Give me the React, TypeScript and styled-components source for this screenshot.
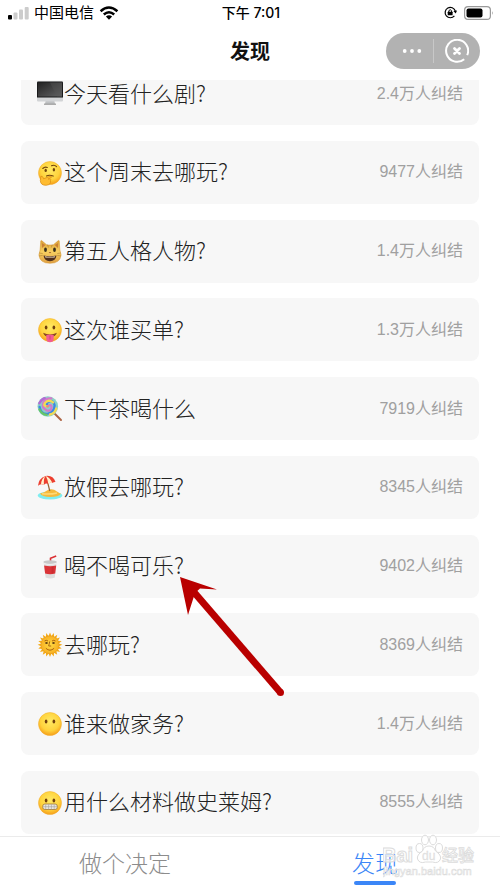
import React, { ReactNode } from "react";
import styled, { createGlobalStyle } from "styled-components";

const Global = createGlobalStyle`
  * { box-sizing: border-box; }
  body { margin: 0; background: #fff; }
  body, button { font-family: "Liberation Sans", "Noto Sans CJK SC", sans-serif; }
  button { border: 0; padding: 0; background: none; color: inherit; cursor: pointer; }
`;

const Screen = styled.div`
  position: relative;
  display: flex;
  flex-direction: column;
  height: 100vh;
  overflow: hidden;
`;

const StatusBar = styled.div`
  display: grid;
  grid-template-columns: 1fr auto 1fr;
  align-items: center;
  flex: none;
  height: 25px;
  padding: 0 6px 0 8px;
  color: #000;
  font: 15px/24px Inter, "Noto Sans CJK SC", sans-serif;
`;

const StatusGroup = styled.div<{ $end?: boolean }>`
  display: flex;
  align-items: center;
  justify-content: ${(p) => (p.$end ? "flex-end" : "flex-start")};
  gap: ${(p) => (p.$end ? 7 : 5)}px;
`;

const Time = styled.time`
  font: 500 14px/24px Inter, "Noto Sans CJK SC", sans-serif;
`;

const Header = styled.header`
  display: grid;
  grid-template-columns: 1fr auto 1fr;
  align-items: center;
  flex: none;
  height: 55px;
  padding: 0 20px 4px;
`;

const Title = styled.h1`
  grid-column: 2;
  margin: 0;
  color: #111;
  font: 700 20px/30px "Noto Sans CJK SC", sans-serif;
`;

const Capsule = styled.div`
  display: grid;
  grid-template-columns: 48px 1fr;
  align-items: center;
  justify-self: end;
  width: 94px;
  height: 36px;
  border-radius: 18px;
  background: #b2b2b2;
`;

const CapsuleButton = styled.button<{ $divided?: boolean }>`
  display: flex;
  align-items: center;
  justify-content: center;
  height: 24px;
  padding-left: ${(p) => (p.$divided ? 5 : 0)}px;
  border-right: ${(p) => (p.$divided ? "1px solid #c8c8c8" : "0")};
`;

const Main = styled.main`
  display: flex;
  flex: 1;
  min-height: 0;
  overflow: hidden;
  padding: 0 21px 2px;
`;

const List = styled.ul`
  display: flex;
  flex: 1;
  flex-direction: column;
  justify-content: space-between;
  margin: -18px 0 0;
  padding: 0;
  list-style: none;
`;

const Card = styled.button`
  display: flex;
  align-items: center;
  width: 100%;
  height: 63px;
  padding: 0 16px;
  border-radius: 8px;
  background: #f7f7f7;
  text-align: left;
`;

const Question = styled.span`
  flex: 1;
  padding: 0 0 4px 1px;
  color: #222;
  font: 300 22px/32px "Noto Sans CJK SC", sans-serif;
`;

const Count = styled.span`
  color: #a0a0a0;
  font: 400 16px/24px "Liberation Sans", "Noto Sans CJK SC", sans-serif;
`;

const TabBar = styled.nav`
  display: grid;
  grid-template-columns: 1fr 1fr;
  flex: none;
  height: 53px;
  border-top: 1px solid #ebebeb;
`;

const Tab = styled.button<{ $active?: boolean }>`
  display: flex;
  flex-direction: column;
  align-items: center;
  padding-top: 9px;
  color: ${(p) => (p.$active ? "#3b86f7" : "#8c8c8c")};
  font: 300 23px/32px "Noto Sans CJK SC", sans-serif;

  &::after {
    content: "";
    width: 42px;
    height: 4px;
    margin-top: 3px;
    border-radius: 2px;
    background: ${(p) => (p.$active ? "#3b86f7" : "transparent")};
  }
`;

const Pointer = styled.svg`
  position: absolute;
  top: 575px;
  left: 179px;
  pointer-events: none;
`;

const Watermark = styled.svg`
  position: absolute;
  right: 25px;
  bottom: 8px;
  pointer-events: none;
`;

const Face = ({ children }: { children?: ReactNode }) => (
  <>
    <circle cx="13" cy="13" r="11.5" fill="url(#face)" stroke="#f3ae2b" strokeWidth=".5" />
    <g transform="translate(.5 1)">{children}</g>
  </>
);

const Eyes = () => (
  <g fill="#71400d">
    <ellipse cx="8.6" cy="9.4" rx="1.35" ry="2" />
    <ellipse cx="16.4" cy="9.4" rx="1.35" ry="2" />
  </g>
);

const emojis: Record<string, ReactNode> = {
  monitor: (
    <>
      <path d="M9 18h8l1 5H8z" fill="#bfc1c3" />
      <path d="M7 22.6h12v1.2H7z" fill="#999" />
      <rect width="26" height="20" y=".5" rx="1" fill="#d2d4d6" />
      <path d="M0 1.5Q0 .5 1 .5h24q1 0 1 1v15H0z" fill="#191a1b" />
      <path d="M1 1.5h24v14H1z" fill="url(#screen)" />
      <path d="M13 1.5h12v14h-5z" fill="#555" opacity=".4" />
    </>
  ),
  thinking: (
    <Face>
      <g fill="none" stroke="#70430d" strokeLinecap="round" strokeWidth="1.1">
        <path d="M5.3 7.5q2-2 4.5-1M14 4.8q3-1.5 5 .8M9 14.9q3-1.5 6.7.2" />
      </g>
      <ellipse cx="8.2" cy="9.4" rx="1.2" ry="1.7" fill="#70430d" />
      <ellipse cx="16.4" cy="8.8" rx="1.2" ry="1.7" fill="#70430d" />
      <path d="M3.3 15.5q1.5-1 2.2 1l.6 1.3 6.5-2.6q1.6-.3 1.4 1.1L10.6 18q3.8-.4 2.4 1.5.8 4.3-4.4 4.8-5.4.1-5.8-4.6z" fill="#ffbc31" stroke="#d88b13" strokeWidth=".7" />
    </Face>
  ),
  cat: (
    <g transform="translate(.5 1)">
      <path d="M2.6 10L3.3.8q.4-.7 1.1 0l5 4.2h6.2l5-4.2q.7-.7 1.1 0L22.4 10l1.2 5q-1 8.3-11.1 8.3T1.4 15z" fill="url(#cat)" stroke="#d49124" strokeWidth=".5" />
      <path d="m4.4 3 .1 5 3.4-3zm16.2 0-.1 5-3.4-3z" fill="#c98035" />
      <path d="M6 15.6q6.5 1.4 13 0-.8 5.6-6.5 5.6T6 15.6z" fill="#50301c" />
      <path d="M7.2 16.3q5.3 1 10.6 0l-.8 1.2H8z" fill="#fff1da" />
      <path d="m11.2 12 1.3 1.3 1.3-1.3z" fill="#985029" />
      <ellipse cx="8" cy="9.8" rx="1.4" ry="2.2" fill="#392f1c" />
      <ellipse cx="17" cy="9.8" rx="1.4" ry="2.2" fill="#392f1c" />
      <path d="m1.7 13 3.5.5M1.5 16l3.7-.6m18.1-2.4-3.5.5m3.7 2.5-3.7-.6M10 4.5l1 3m3.8-3-1 3" stroke="#9e702c" strokeWidth=".5" />
    </g>
  ),
  tongue: (
    <Face>
      <Eyes />
      <path d="M5.6 14.8q6.9 3.3 13.8 0-1 4.2-6.9 4.2t-6.9-4.2z" fill="#8a4920" />
      <path d="M8.8 17.1q3.7-1.1 7.4 0v4q-.4 3.2-3.7 3.2t-3.7-3.2z" fill="#f25c91" />
      <path d="M12.5 17.5v4" stroke="#c63e6f" strokeWidth=".8" />
    </Face>
  ),
  lollipop: (
    <>
      <path d="m17 17 7 7" stroke="#ae6545" strokeWidth="2" strokeLinecap="round" />
      <circle cx="10.8" cy="10.5" r="10.3" fill="#8ad2c7" />
      <g fill="none" strokeWidth="2.3" strokeLinecap="round" transform="translate(.3 .3)">
        <path d="M10.3 10q-2-4 2-5t5 4q0 7-7 8.5-7 .5-8-7" stroke="#3c88e4" />
        <path d="M10.3 10q4-3 4 1.5-1 4-5.2 2.5Q3.5 11 6.5 5.4 9 1.5 14 2.1" stroke="#d479cb" />
        <path d="M10.2 10q-4.5.2-2.7-3.2Q11 2.4 15.8 6m-3.2 12.2q5-.8 6.3-6" stroke="#f3da54" />
        <path d="M2.2 13.2q2.4 5 7.3 5.3" stroke="#67c567" />
        <path d="M2 7q2-4 5.5-5.2" stroke="#b46ad5" />
      </g>
      <circle cx="10.6" cy="10.3" r="1.3" fill="#ef8978" />
    </>
  ),
  beach: (
    <>
      <ellipse cx="13" cy="20.5" rx="12.3" ry="4" fill="#7fedf0" />
      <path d="M3 18.5q5-1 7-3 5-3 10 1 2.5 2 4 2.3-3 3.4-11 3.2T3 18.5z" fill="#f6ba3c" />
      <path d="M5 18.7q8 1 15-.8" fill="none" stroke="#ffda75" strokeWidth="1.5" />
      <path d="m9.5 3 3.3 13" stroke="#986537" strokeWidth="1.2" />
      <path d="M1 10.7Q1.5 3.6 8.5 1q7.5-1.2 10 6-1.5-.2-3 1-2.3-1-4.3.8-2.4-1-4.2.9-3-1.1-6 1z" fill="#ec3e2f" />
      <path d="M8.5 1Q4.2 3.8 4 9.6q1.6-.5 3 .1Q6.3 3.5 8.5 1q4 1 7 7-2.3-1-4.3.8Q10.7 3.4 8.5 1z" fill="#fff1cc" />
    </>
  ),
  cup: (
    <g transform="translate(.5 1)">
      <path d="M13 9V3.2L18.7.9" fill="none" stroke="#db3034" strokeWidth="1.6" />
      <path d="m6.3 7 1.8 15.5q5 2 9.2 0L19 7z" fill="#dedddd" />
      <path d="m6.6 10.5 1 8q5 1.5 10.1 0l1-8q-6 1.5-12.1 0z" fill="#da3438" />
      <ellipse cx="12.6" cy="7" rx="6.7" ry="1.7" fill="#c8c8c8" />
      <path d="M5.9 7.5q6 3 13.4 0V9q-7 2.2-13.4 0z" fill="#eee" />
      <path d="m15.2 11.8-.2 6.5" stroke="#b32025" strokeWidth="2" opacity=".35" />
    </g>
  ),
  sun: (
    <g transform="translate(.5 .5)">
      <g fill="#f4aa16">
        {Array.from({ length: 20 }, (_, i) => (
          <path key={i} d="m10.9 4 1.6-4 1.6 4z" transform={`rotate(${i * 18} 12.5 12.3)`} />
        ))}
      </g>
      <circle cx="12.5" cy="12.3" r="9" fill="url(#sun)" stroke="#e69b1b" strokeWidth=".6" />
      <path d="M7 8.5q1.8-1.4 3.5 0m4 0q1.8-1.4 3.5 0M12.2 9l-1 4.5h2.5M8.4 15.8q4 3.8 8.2 0" fill="none" stroke="#ac6410" />
      <ellipse cx="9" cy="10.4" rx="1.3" ry="1" fill="#613e12" />
      <ellipse cx="16" cy="10.4" rx="1.3" ry="1" fill="#613e12" />
    </g>
  ),
  silent: (
    <Face>
      <Eyes />
    </Face>
  ),
  grimace: (
    <Face>
      <Eyes />
      <rect x="5.2" y="13" width="14.6" height="5.5" rx="2.2" fill="#e9e7df" stroke="#a07633" strokeWidth=".8" />
      <path d="M5.5 15.7h14M8.2 13.5v4.8m2.9-5v5.2m2.8-5.2v5.2m2.8-5v4.8" stroke="#a3a09a" strokeWidth=".6" />
    </Face>
  ),
};

const Emoji = ({ name }: { name: string }) => (
  <svg width="26" height="25" viewBox="0 0 26 25" overflow="visible" aria-hidden="true">
    {emojis[name]}
  </svg>
);

const Gradients = () => (
  <svg width="0" height="0" display="block" aria-hidden="true">
    <defs>
      <radialGradient id="face" cx="50%" cy="38%" r="63%">
        <stop offset="0" stopColor="#ffe964" />
        <stop offset=".65" stopColor="#ffd33c" />
        <stop offset="1" stopColor="#f59b18" />
      </radialGradient>
      <radialGradient id="sun">
        <stop offset="0" stopColor="#ffda45" />
        <stop offset="1" stopColor="#f8b021" />
      </radialGradient>
      <linearGradient id="cat" x2="0" y2="1">
        <stop stopColor="#dba03a" />
        <stop offset=".5" stopColor="#f7cf60" />
        <stop offset="1" stopColor="#dfa044" />
      </linearGradient>
      <linearGradient id="screen" x2="1" y2="1">
        <stop stopColor="#222" />
        <stop offset="1" stopColor="#626364" />
      </linearGradient>
    </defs>
  </svg>
);

const questions = [
  { emoji: "monitor", text: "今天看什么剧?", count: "2.4万人纠结" },
  { emoji: "thinking", text: "这个周末去哪玩?", count: "9477人纠结" },
  { emoji: "cat", text: "第五人格人物?", count: "1.4万人纠结" },
  { emoji: "tongue", text: "这次谁买单?", count: "1.3万人纠结" },
  { emoji: "lollipop", text: "下午茶喝什么", count: "7919人纠结" },
  { emoji: "beach", text: "放假去哪玩?", count: "8345人纠结" },
  { emoji: "cup", text: "喝不喝可乐?", count: "9402人纠结" },
  { emoji: "sun", text: "去哪玩?", count: "8369人纠结" },
  { emoji: "silent", text: "谁来做家务?", count: "1.4万人纠结" },
  { emoji: "grimace", text: "用什么材料做史莱姆?", count: "8555人纠结" },
];

export default function App() {
  return (
    <Screen>
      <Global />
      <Gradients />
      <StatusBar>
        <StatusGroup>
          <svg width="21" height="14" viewBox="0 0 21 14" aria-label="信号">
            <rect y="9" width="4" height="4.5" rx="1" />
            <g fill="#ccc">
              <rect x="5.5" y="6.5" width="4" height="7" rx="1" />
              <rect x="11" y="3.5" width="4" height="10" rx="1" />
              <rect x="16.7" y="1" width="4" height="12.5" rx="1" />
            </g>
          </svg>
          <span>中国电信</span>
          <svg width="20" height="14" viewBox="0 0 20 14" aria-label="无线网络">
            <path d="M1.6 5.2q8.2-7.3 16.8 0M4.8 8.5q5.2-4.4 10.4 0" fill="none" stroke="#000" strokeWidth="2.5" />
            <path d="M6.9 10.6q3.1-2.5 6.2 0L10 13.7z" />
          </svg>
        </StatusGroup>
        <Time>下午 7:01</Time>
        <StatusGroup $end>
          <svg width="13" height="13" viewBox="0 0 13 13" aria-label="方向锁定">
            <path d="M10.4 9.8A5.2 5.2 0 1 1 11.3 5" fill="none" stroke="#000" strokeWidth="1.2" />
            <path d="m9.4 5 3.6-.5-1.3 3z" />
            <rect x="3.7" y="5.7" width="4.9" height="3.6" rx=".5" />
            <path d="M4.8 6V4.7q1.4-2 2.8 0V6" fill="none" stroke="#000" />
          </svg>
          <svg width="30" height="14" viewBox="0 0 30 14" aria-label="电量">
            <rect x=".6" y=".6" width="25.8" height="12.8" rx="3.5" fill="none" stroke="#999" strokeWidth="1.2" />
            <rect x="2.5" y="2.4" width="16" height="9.2" rx="2" />
            <path d="M28 5q1.6 2 0 4z" fill="#999" />
          </svg>
        </StatusGroup>
      </StatusBar>
      <Header>
        <Title>发现</Title>
        <Capsule>
          <CapsuleButton $divided aria-label="更多">
            <svg width="20" height="4" viewBox="0 0 20 4" fill="#fff">
              <circle cx="2.7" cy="2" r="1.9" />
              <circle cx="10" cy="2" r="1.9" />
              <circle cx="17.3" cy="2" r="1.9" />
            </svg>
          </CapsuleButton>
          <CapsuleButton aria-label="关闭">
            <svg width="24" height="24" viewBox="0 0 24 24" fill="none" stroke="#fff">
              <path d="M19.2 20.2A11 11 0 1 1 22.2 16.2" strokeWidth="2" />
              <path d="m9.5 9.5 5 5m0-5-5 5" strokeWidth="2.8" strokeLinecap="round" />
            </svg>
          </CapsuleButton>
        </Capsule>
      </Header>
      <Main>
        <List>
          {questions.map((q) => (
            <li key={q.emoji}>
              <Card>
                <Emoji name={q.emoji} />
                <Question>{q.text}</Question>
                <Count>{q.count}</Count>
              </Card>
            </li>
          ))}
        </List>
      </Main>
      <TabBar>
        <Tab>做个决定</Tab>
        <Tab $active>发现</Tab>
      </TabBar>
      <Pointer width="108" height="122" viewBox="0 0 108 122" aria-hidden="true">
        <path d="M1 2 38 14.5 21 13.5 16 18 9 40z" fill="#b90000" />
        <path d="m14 16 87.5 101.5" stroke="#b90000" strokeWidth="7" />
        <circle cx="101.5" cy="117.5" r="3.5" fill="#b90000" />
      </Pointer>
      <Watermark width="92" height="48" viewBox="0 0 92 48" aria-hidden="true">
        <g fill="#fff" fillOpacity=".7" stroke="#dcdcdc" strokeWidth="1" fontFamily='"Liberation Sans", "Noto Sans CJK SC", sans-serif'>
          <text x="-1" y="29" fontSize="20" fontWeight="700">Bai</text>
          <ellipse cx="36.5" cy="15" rx="3.5" ry="4.5" />
          <ellipse cx="42" cy="7" rx="3.5" ry="4.8" />
          <ellipse cx="50" cy="7" rx="3.5" ry="4.8" />
          <ellipse cx="56" cy="15" rx="3.5" ry="4.5" />
          <path d="M46 13q5 0 6.5 5 6 4 5 8-2 5-8 3h-7q-6 2-8-3-1-4 5-8 1.5-5 6.500-5z" />
          <text x="39" y="27" fontSize="12" fontWeight="400" fill="#d8d8d8" strokeWidth=".3">du</text>
          <text x="59" y="28" fontSize="16" fontWeight="500" strokeWidth=".8">经验</text>
          <text x="0" y="42" fontSize="11" strokeWidth=".6">jingyan.baidu.com</text>
        </g>
      </Watermark>
    </Screen>
  );
}
